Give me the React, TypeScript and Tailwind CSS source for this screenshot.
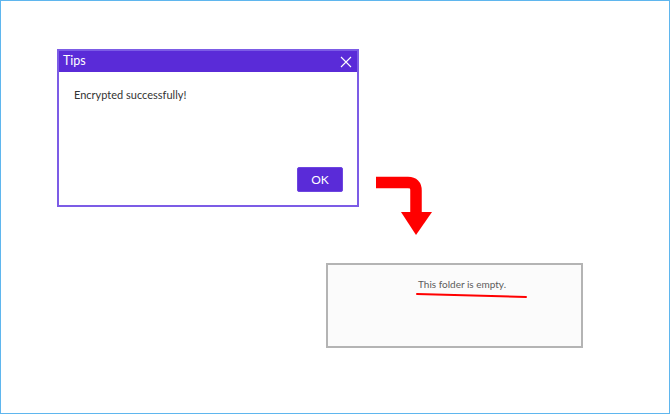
import React from "react";

export default function App() {
  return (
    <div
      className="w-[670px] h-[414px] border border-[#5fb6ee] bg-white overflow-hidden"
      style={{ fontFamily: 'Lato, "Noto Sans", sans-serif' }}
    >
      <div className="flex items-start mt-[48px]">
        {/* Dialog */}
        <div className="ml-[56px] w-[302px] h-[158px] border-2 border-[#7c5ce6] bg-white flex flex-col">
          <div className="h-[21px] bg-[#5a2bd8] flex items-center justify-between pl-[4px] pr-[4px]">
            <span className="text-white text-[12.5px] leading-none">Tips</span>
            <svg width="12" height="12" viewBox="0 0 12 12" className="mr-[1px]">
              <path d="M1 1 L11 11 M11 1 L1 11" stroke="#ffffff" strokeWidth="1.1" fill="none" />
            </svg>
          </div>
          <div className="flex-1 flex flex-col">
            <p className="pl-[15px] pt-[15px] text-[11px] leading-[16px] text-[#333333]">
              Encrypted successfully!
            </p>
            <div className="flex-1" />
            <div className="flex justify-end pr-[14px] pb-[13px]">
              <button className="w-[46px] h-[25px] bg-[#5a2bd8] border border-[#6d45e0] rounded-[2px] text-white text-[12px] leading-none flex items-center justify-center">
                OK
              </button>
            </div>
          </div>
        </div>
        {/* Arrow */}
        <svg width="70" height="70" viewBox="0 0 70 70" className="ml-[11px] mt-[121px]">
          <path
            d="M6 12.5 H38 Q46 12.5 46 20.5 V43"
            stroke="#ff0000"
            strokeWidth="11.5"
            fill="none"
            strokeLinejoin="round"
          />
          <polygon points="31,42 62,42 46,65" fill="#ff0000" />
        </svg>
      </div>
      {/* Empty folder box */}
      <div className="ml-[325px] mt-[23px] w-[257px] h-[85px] border-2 border-[#b4b4b4] bg-[#fbfbfb] flex flex-col">
        <p className="pl-[90px] pt-[12px] text-[10px] leading-[14px] text-[#5c5c5c]">
          This folder is empty.
        </p>
        <svg width="112" height="8" viewBox="0 0 112 8" className="ml-[88px] mt-[1px]">
          <path d="M1 2 L110 5" stroke="#ff0000" strokeWidth="2" strokeLinecap="round" fill="none" />
        </svg>
      </div>
    </div>
  );
}
